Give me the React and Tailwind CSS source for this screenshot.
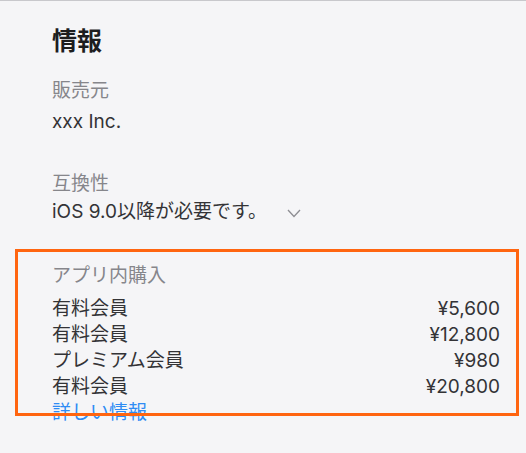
import React from 'react';

const purchases = [
  { name: '有料会員', price: '¥5,600' },
  { name: '有料会員', price: '¥12,800' },
  { name: 'プレミアム会員', price: '¥980' },
  { name: '有料会員', price: '¥20,800' },
];

function Chevron() {
  return (
    <svg width="14" height="9" viewBox="0 0 14 9" className="ml-[20px] mt-[3px]">
      <polyline points="1,1 7,7.5 13,1" fill="none" stroke="#8e8e93" strokeWidth="1.3" />
    </svg>
  );
}

export default function App() {
  return (
    <div
      className="relative min-h-[453px] bg-[#f5f5f7] border-t border-[#c8c8cc] pl-[52px] pr-[26px] pt-[24px] text-[19px] leading-[26px] text-[#333336]"
      style={{ fontFamily: 'Inter, "Noto Sans CJK JP", sans-serif' }}
    >
      {/* ─── HEADING ─────────────────────────────── */}
      <h2 className="text-[25px] leading-[32px] font-bold text-[#1d1d1f]">情報</h2>

      {/* ─── SELLER ──────────────────────────────── */}
      <div className="mt-[21px]">
        <div className="text-[#86868b]">販売元</div>
        <div className="mt-[5px]">xxx Inc.</div>
      </div>

      {/* ─── COMPATIBILITY ───────────────────────── */}
      <div className="mt-[36px]">
        <div className="text-[#86868b]">互換性</div>
        <div className="mt-[2px] flex items-center">
          <span>iOS 9.0以降が必要です。</span>
          <Chevron />
        </div>
      </div>

      {/* ─── IN-APP PURCHASES ────────────────────── */}
      <div className="mt-[38px]">
        <div className="text-[#86868b]">アプリ内購入</div>
        <ul className="mt-[7px]">
          {purchases.map((p, i) => (
            <li key={i} className="flex justify-between">
              <span>{p.name}</span>
              <span>{p.price}</span>
            </li>
          ))}
        </ul>
        <a href="#" className="block text-[#2f8cf4]">詳しい情報</a>
      </div>

      {/* annotation frame drawn over the purchases block */}
      <div className="pointer-events-none absolute left-[15px] top-[248px] w-[504px] h-[167px] border-[3px] border-[#ff6510]" />
    </div>
  );
}
